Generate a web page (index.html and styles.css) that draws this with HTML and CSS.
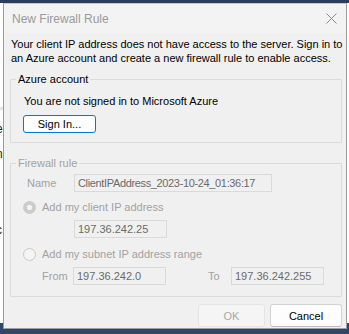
FILE: index.html
```html
<!DOCTYPE html>
<html>
<head>
<meta charset="utf-8">
<title>New Firewall Rule</title>
<link rel="stylesheet" href="styles.css">
</head>
<body>
<div class="app">
	<div class="app-top"></div>
	<div class="app-body">
		<div class="app-edge">
			<span class="edge-rule"></span>
			<span class="edge-char e1">e</span>
			<span class="edge-char e2">n</span>
			<span class="edge-char e3">t</span>
			<span class="edge-char e4">c</span>
		</div>
	</div>
	<div class="app-bottom"></div>

	<!-- dialog sits over the app window -->
	<div class="dialog">
		<div class="titlebar">
			<span class="title">New Firewall Rule</span>
			<svg class="close" width="11" height="11" viewBox="0 0 11 11">
				<path d="M0.5 0.5 L10.5 10.5 M10.5 0.5 L0.5 10.5" stroke="#8a8a8a" stroke-width="1" fill="none"/>
			</svg>
		</div>
		<div class="content">
			<p class="intro">Your client IP address does not have access to the server. Sign in to<br>an Azure account and create a new firewall rule to enable access.</p>

			<fieldset class="group">
				<legend>Azure account</legend>
				<p class="status">You are not signed in to Microsoft Azure</p>
				<button type="button" class="btn btn-sign">Sign In...</button>
			</fieldset>

			<fieldset class="group group-off">
				<legend>Firewall rule</legend>
				<div class="row row-name">
					<span class="label label-name">Name</span>
					<span class="field field-name">ClientIPAddress_2023-10-24_01:36:17</span>
				</div>
				<div class="radio-row first">
					<span class="radio checked"></span>
					<span class="label">Add my client IP address</span>
				</div>
				<div class="row row-ip">
					<span class="field field-ip">197.36.242.25</span>
				</div>
				<div class="radio-row second">
					<span class="radio"></span>
					<span class="label">Add my subnet IP address range</span>
				</div>
				<div class="row row-range">
					<span class="label label-from">From</span>
					<span class="field field-ip">197.36.242.0</span>
					<span class="label label-to">To</span>
					<span class="field field-ip">197.36.242.255</span>
				</div>
			</fieldset>

			<div class="actions">
				<button type="button" class="btn btn-ok" disabled>OK</button>
				<button type="button" class="btn btn-cancel">Cancel</button>
			</div>
		</div>
	</div>
</div>
</body>
</html>
```

FILE: styles.css
```css
body {
	margin: 0;
	width: 349px;
	height: 334px;
	overflow: hidden;
	font-family: "Liberation Sans", Arial, sans-serif;
	font-size: 11px;
	color: #000;
}
.app {
	position: relative;
	height: 334px;
	display: flex;
	flex-direction: column;
	background: #fff;
}
.app-top {
	height: 3px;
	background: #2c3d5b;
}
.app-body {
	flex: 1;
}
.app-bottom {
	height: 11px;
	background: #33466a;
}
.app-edge {
	display: flex;
	flex-direction: column;
	width: 3px;
	overflow: hidden;
	font-size: 12px;
}
.edge-rule {
	height: 3px;
	margin-top: 104px;
	background: #e4e4e4;
}
.edge-char {
	margin-left: -4px;
	line-height: 14px;
	height: 14px;
	color: #222;
}
.e1 { margin-top: 12px; }
.e2 { margin-top: 11px; }
.e3 { margin-top: 10px; }
.e4 { margin-top: 38px; }

.dialog {
	position: absolute;
	left: 3px;
	top: 3px;
	width: 344px;
	height: 326px;
	box-sizing: border-box;
	border: 1px solid #9c9c9c;
	border-top-color: #c8c8c8;
	background: #f0f0f0;
	white-space: nowrap;
}
.titlebar {
	height: 29px;
	display: flex;
	align-items: center;
	justify-content: space-between;
	padding: 0 9px 0 8px;
	background: #f3f3f3;
}
.title {
	color: #9a9a9a;
	font-size: 12px;
	padding-top: 1px;
}
.close {
	display: block;
}
.content {
	padding: 4px 0 0 0;
}
.intro {
	margin: 0 0 0 7px;
	line-height: 14px;
}
.group {
	margin: 7px 0 0 6px;
	padding: 0 0 9px 0;
	width: 332px;
	box-sizing: border-box;
	border: 1px solid #dcdcdc;
	min-width: 0;
}
.group legend {
	margin-left: 5px;
	padding: 0 2px;
	line-height: 14px;
}
.status {
	margin: 8px 0 0 13px;
	line-height: 14px;
}
.btn {
	font-family: "Liberation Sans", Arial, sans-serif;
	font-size: 11px;
	box-sizing: border-box;
	padding: 0;
	border-radius: 3px;
	color: #000;
}
.btn-sign {
	display: block;
	margin: 7px 0 0 12px;
	width: 73px;
	height: 18px;
	background: #fdfdfd;
	border: 1px solid #0078d7;
	line-height: 15px;
}

.group-off {
	margin-top: 13px;
	padding-bottom: 11px;
}
.group-off legend,
.group-off .label {
	color: #a2a2a2;
}
.row {
	display: flex;
	align-items: center;
	height: 18px;
	margin-top: 4px;
}
.row-name {
	padding-left: 16px;
}
.label-name {
	width: 47px;
}
.row-ip {
	padding-left: 63px;
}
.row-range {
	padding-left: 31px;
}
.label-from {
	width: 31px;
}
.label-to {
	margin-left: 42px;
	width: 23px;
}
.field {
	box-sizing: border-box;
	height: 18px;
	line-height: 16px;
	padding-left: 3px;
	border: 1px solid #dadada;
	background: #f0f0f0;
	color: #6a6a6a;
	overflow: hidden;
}
.field-name {
	width: 198px;
	letter-spacing: -0.35px;
}
.field-ip {
	width: 93px;
}
.radio-row {
	display: flex;
	align-items: center;
	gap: 6px;
	height: 18px;
	padding-left: 12px;
}
.radio-row.first {
	margin-top: 6px;
}
.radio-row.second {
	margin-top: 7px;
}
.radio {
	width: 13px;
	height: 13px;
	box-sizing: border-box;
	border-radius: 50%;
	border: 1px solid #cacaca;
	background: #f4f4f4;
}
.radio.checked {
	background: radial-gradient(circle, #f2f2f2 0 2.5px, #cccccc 3px);
}

.actions {
	display: flex;
	justify-content: flex-end;
	gap: 5px;
	margin-top: 7px;
	padding-right: 4px;
}
.btn-ok {
	width: 67px;
	height: 23px;
	background: #f5f5f5;
	border: 1px solid #e4e4e4;
	color: #a8a8a8;
}
.btn-cancel {
	width: 72px;
	height: 23px;
	background: #fdfdfd;
	border: 1px solid #d2d2d2;
	border-bottom-color: #bdbdbd;
}
```
